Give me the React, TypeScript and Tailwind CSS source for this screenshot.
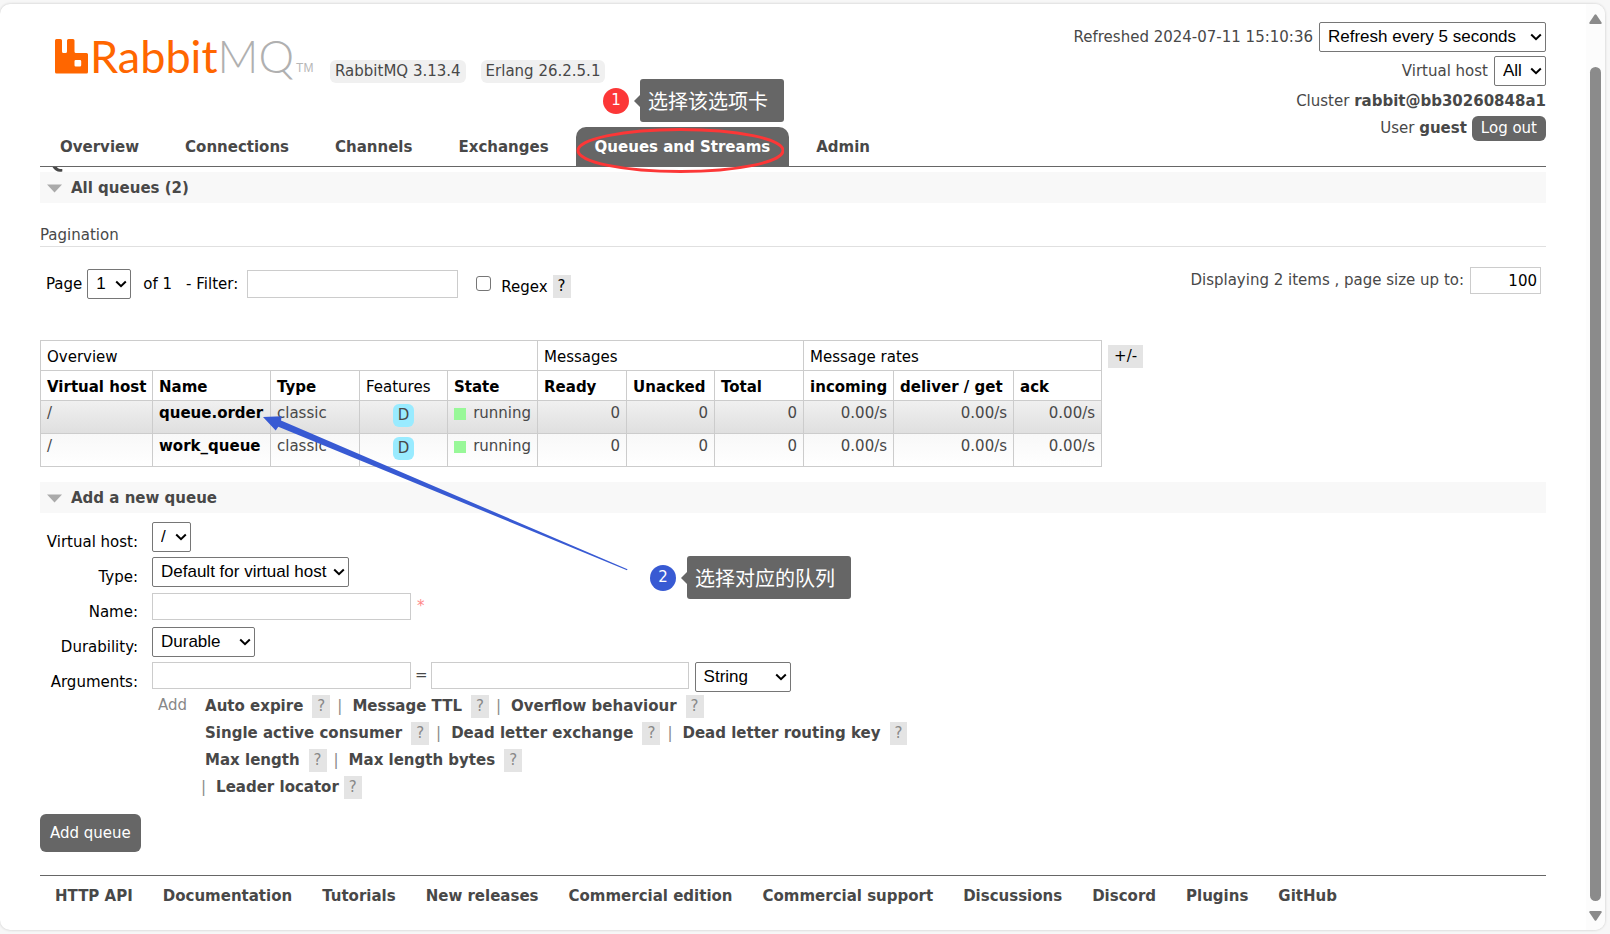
import type { ReactNode } from "react";

const NAV = ["Overview", "Connections", "Channels", "Exchanges", "Queues and Streams", "Admin"];

const FOOTER = [
  "HTTP API",
  "Documentation",
  "Tutorials",
  "New releases",
  "Commercial edition",
  "Commercial support",
  "Discussions",
  "Discord",
  "Plugins",
  "GitHub",
];

const QUEUES = [
  { name: "queue.order", fill: "bg-linear-to-b from-[#f0f0f0] to-[#dfdfdf]" },
  { name: "work_queue", fill: "bg-linear-to-b from-[#f8f8f8] to-white" },
];

const ARGUMENTS = [
  ["Auto expire", "Message TTL", "Overflow behaviour"],
  ["Single active consumer", "Dead letter exchange", "Dead letter routing key"],
  ["Max length", "Max length bytes"],
];

function Select({ id, label, value, width }: { id: string; label?: string; value: string; width: string }) {
  return (
    <span className="relative inline-flex">
      <select
        id={id}
        aria-label={label}
        defaultValue={value}
        className={`h-[30px] appearance-none rounded-xs border border-[#767676] bg-white pl-2 font-['Liberation_Sans',Arial,sans-serif] text-[17px] leading-5 text-black ${width}`}
      >
        <option>{value}</option>
      </select>
      <svg viewBox="0 0 12 8" aria-hidden="true" className="pointer-events-none absolute top-[11px] right-1 h-2 w-3">
        <path d="M1.2 1.5 L6 6.2 L10.8 1.5" fill="none" stroke="#000" strokeWidth="2" />
      </svg>
    </span>
  );
}

function Help({ tone = "text-[#888]" }: { tone?: string }) {
  return (
    <button type="button" className={`h-[23px] bg-[#e4e4e4] px-[5px] ${tone}`}>
      ?
    </button>
  );
}

function SectionTitle({ children }: { children: ReactNode }) {
  return (
    <h2 className="flex h-[31px] items-center gap-[9px] bg-[#f8f8f8] pt-0.5 pl-[7px] font-bold text-[#484848]">
      <svg viewBox="0 0 15 9" aria-hidden="true" className="h-[9px] w-[15px]">
        <path d="M0 0.5 H15 L7.5 8.5 Z" fill="#aaa" />
      </svg>
      {children}
    </h2>
  );
}

function Logo() {
  return (
    <a href="#home" className="flex w-[255px] items-end text-[45px] leading-9">
      <svg viewBox="0 0 33 35" aria-hidden="true" className="h-[35px] w-[33px] shrink-0">
        <path
          fillRule="evenodd"
          fill="#f60"
          d="M1.5 0 H5.5 Q7 0 7 1.5 V12.5 Q7 14 8.5 14 H10.5 Q12 14 12 12.5 V1.5 Q12 0 13.5 0 H18 Q19.5 0 19.5 1.5 V12.5 Q19.5 14 21 14 H31.5 Q33 14 33 15.5 V33 Q33 34.5 31.5 34.5 H1.5 Q0 34.5 0 33 V1.5 Q0 0 1.5 0 Z M20.7 21 Q19.5 21 19.5 22.2 V26.2 Q19.5 27.4 20.7 27.4 H25 Q26.2 27.4 26.2 26.2 V22.2 Q26.2 21 25 21 Z"
        />
      </svg>
      <span className="ml-0.5 font-[Lato,sans-serif] text-[#f60]">Rabbit</span>
      <span className="font-[Lato,sans-serif] font-light text-[#b0b0b0]">MQ</span>
      <span className="ml-0.5 font-['Liberation_Sans',sans-serif] text-xs leading-3 text-[#b7b7b7]">TM</span>
    </a>
  );
}

function Bubble({ n, color, children }: { n: number; color: string; children: ReactNode }) {
  return (
    <div className="flex items-center whitespace-nowrap text-white">
      <span className={`flex size-[26px] items-center justify-center rounded-full ${color}`}>{n}</span>
      <svg viewBox="0 0 6 12" aria-hidden="true" className="ml-[5px] h-3 w-1.5">
        <path d="M6 0 L0 6 L6 12 Z" fill="#666" />
      </svg>
      <span className="flex h-[43px] items-center rounded-[3px] bg-[#666] pr-4 pl-2 font-['Noto_Sans_CJK_SC',sans-serif] text-xl">
        {children}
      </span>
    </div>
  );
}

function Argument({ name, first }: { name: string; first: boolean }) {
  return (
    <>
      {!first && <span className="mr-[10px] ml-[7px]">|</span>}
      <a href="#argument" className="mr-[9px] font-bold text-[#484848]">
        {name}
      </a>
      <Help />
    </>
  );
}

const head = "border border-[#ccc] px-1.5 pt-[3px]";
const cell = "border border-[#ccc] px-1.5 pt-px";
const field = "border border-[#ccc] bg-white px-1";
const formLabel = "pt-[9px] text-right text-black";

export default function App() {
  return (
    <div className="min-h-screen bg-[#f7f7f7] pt-1 pr-[5px] pb-[5px] font-['DejaVu_Sans',Verdana,sans-serif] text-[15px] leading-[23px] text-[#484848]">
      <div className="relative flex rounded-[10px] bg-white shadow-[0_0_3px_rgba(0,0,0,0.2)]">
        <div className="min-w-0 flex-1 pr-10 pb-[11px] pl-10">
          <header className="flex h-[123px] justify-between pt-[18px]">
            <div className="flex items-end self-start pt-[16px] pl-[15px]">
              <Logo />
              <div className="-mb-[9px] ml-5 flex gap-[15px]">
                <span className="rounded-md bg-[#f0f0f0] px-[5px]">RabbitMQ 3.13.4</span>
                <span className="rounded-md bg-[#f0f0f0] px-[5px]">Erlang 26.2.5.1</span>
              </div>
            </div>
            <div className="flex flex-col items-end">
              <div className="flex items-center gap-1.5">
                <label htmlFor="refresh">Refreshed 2024-07-11 15:10:36</label>
                <Select id="refresh" value="Refresh every 5 seconds" width="w-[227px]" />
              </div>
              <div className="mt-1 flex items-center gap-1.5">
                <label htmlFor="vhost-view">Virtual host</label>
                <Select id="vhost-view" value="All" width="w-[52px]" />
              </div>
              <div className="mt-1">
                Cluster <b>rabbit@bb30260848a1</b>
              </div>
              <div className="mt-[3px] flex items-center gap-[5px]">
                <span>
                  User <b>guest</b>
                </span>
                <button type="button" className="h-[25px] rounded-md bg-[#666] px-[9px] text-white">
                  Log out
                </button>
              </div>
            </div>
          </header>

          <nav className="flex gap-2 border-b border-[#666] pl-px">
            {NAV.map((item) => (
              <a
                key={item}
                href="#tab"
                className={
                  item === "Queues and Streams"
                    ? "relative rounded-t-[10px] bg-[#666] px-[19px] pt-[9px] pb-[7px] font-bold text-white"
                    : "px-[19px] pt-[9px] pb-[7px] font-bold"
                }
              >
                {item}
                {item === "Queues and Streams" && (
                  <svg
                    viewBox="0 0 208 46"
                    aria-hidden="true"
                    className="pointer-events-none absolute top-0 left-0 h-[46px] w-[208px]"
                  >
                    <ellipse cx="104.5" cy="23.5" rx="102.5" ry="21" fill="none" stroke="#fc3737" strokeWidth="3" />
                  </svg>
                )}
              </a>
            ))}
          </nav>

          <main>
            <div className="h-[5px] pl-3">
              <svg viewBox="0 0 11 5" aria-hidden="true" className="h-[5px] w-[11px]">
                <path d="M0.5 0 H5 Q6 2.2 10.3 2 V4.4 Q4 5.8 0.5 0 Z" fill="#484848" />
              </svg>
            </div>
            <SectionTitle>All queues (2)</SectionTitle>

            <h3 className="mt-[21px] border-b border-[#e0e0e0] leading-[22px]">Pagination</h3>

            <div className="mt-5 flex items-start justify-between pr-[5px] pl-1.5">
              <div className="mt-0.5 flex items-start text-black">
                <label htmlFor="page" className="mt-1 mr-[5px]">
                  Page
                </label>
                <Select id="page" value="1" width="w-11" />
                <span className="mt-1 ml-3">of 1</span>
                <label htmlFor="filter" className="mt-1 ml-3.5">
                  - Filter:
                </label>
                <input id="filter" type="text" className={`mt-px ml-[9px] h-7 w-[211px] ${field}`} />
                <input
                  id="regex"
                  type="checkbox"
                  className="mt-[7px] ml-[18px] size-[15px] appearance-none rounded-[3px] border border-[#767676] bg-white"
                />
                <label htmlFor="regex" className="mt-[7px] mr-[5px] ml-[10px]">
                  Regex
                </label>
                <span className="mt-1.5 flex">
                  <Help tone="text-black" />
                </span>
              </div>
              <div className="flex items-center gap-1.5">
                <label htmlFor="page-size">Displaying 2 items , page size up to:</label>
                <input
                  id="page-size"
                  type="text"
                  defaultValue="100"
                  className="h-[27px] w-[71px] border border-[#ccc] bg-white px-[3px] text-right text-black"
                />
              </div>
            </div>

            <div className="mt-[41px] flex items-start gap-1.5">
              <table className="w-[1062px] table-fixed border-collapse">
                <colgroup>
                  <col className="w-[112px]" />
                  <col className="w-[118px]" />
                  <col className="w-[89px]" />
                  <col className="w-[88px]" />
                  <col className="w-[90px]" />
                  <col className="w-[89px]" />
                  <col className="w-[88px]" />
                  <col className="w-[89px]" />
                  <col className="w-[90px]" />
                  <col className="w-[120px]" />
                  <col className="w-[88px]" />
                </colgroup>
                <thead className="text-left whitespace-nowrap text-black">
                  <tr className="h-[30px]">
                    <th colSpan={5} className={`${head} font-normal`}>
                      Overview
                    </th>
                    <th colSpan={3} className={`${head} font-normal`}>
                      Messages
                    </th>
                    <th colSpan={3} className={`${head} font-normal`}>
                      Message rates
                    </th>
                  </tr>
                  <tr className="h-[30px]">
                    <th className={head}>Virtual host</th>
                    <th className={head}>Name</th>
                    <th className={head}>Type</th>
                    <th className={`${head} font-normal`}>Features</th>
                    <th className={head}>State</th>
                    <th className={head}>Ready</th>
                    <th className={head}>Unacked</th>
                    <th className={head}>Total</th>
                    <th className={head}>incoming</th>
                    <th className={head}>deliver / get</th>
                    <th className={head}>ack</th>
                  </tr>
                </thead>
                <tbody className="align-top">
                  {QUEUES.map((q) => (
                    <tr key={q.name} className={`h-[33px] ${q.fill}`}>
                      <td className={cell}>/</td>
                      <td className={cell}>
                        <a href="#queue" className="font-bold text-black">
                          {q.name}
                        </a>
                      </td>
                      <td className={cell}>classic</td>
                      <td className="border border-[#ccc] px-1.5 pt-[3px] text-center">
                        <abbr title="durable" className="inline-block h-[23px] rounded-md bg-[#99ebff] px-[5px] no-underline">
                          D
                        </abbr>
                      </td>
                      <td className={cell}>
                        <span className="flex items-center gap-[7px]">
                          <span className="h-3 w-[13px] bg-[#98f898]" />
                          running
                        </span>
                      </td>
                      <td className={`${cell} text-right`}>0</td>
                      <td className={`${cell} text-right`}>0</td>
                      <td className={`${cell} text-right`}>0</td>
                      <td className={`${cell} text-right`}>0.00/s</td>
                      <td className={`${cell} text-right`}>0.00/s</td>
                      <td className={`${cell} text-right`}>0.00/s</td>
                    </tr>
                  ))}
                </tbody>
              </table>
              <button type="button" className="mt-[5px] h-[23px] bg-[#e4e4e4] px-1.5 text-black">
                +/-
              </button>
            </div>

            <div className="mt-[15px]">
              <SectionTitle>Add a new queue</SectionTitle>
            </div>

            <form className="mt-[9px]">
              <div className="grid auto-rows-[30px] grid-cols-[98px_1fr] gap-x-3.5 gap-y-[5px]">
                <label htmlFor="vhost" className={formLabel}>
                  Virtual host:
                </label>
                <div>
                  <Select id="vhost" value="/" width="w-[39px]" />
                </div>
                <label htmlFor="type" className={formLabel}>
                  Type:
                </label>
                <div>
                  <Select id="type" value="Default for virtual host" width="w-[197px]" />
                </div>
                <label htmlFor="name" className={formLabel}>
                  Name:
                </label>
                <div className="flex items-start gap-1.5 pt-px">
                  <input id="name" type="text" className={`h-[27px] w-[259px] ${field}`} />
                  <span className="mt-0.5 text-[#f88]">*</span>
                </div>
                <label htmlFor="durability" className={formLabel}>
                  Durability:
                </label>
                <div>
                  <Select id="durability" value="Durable" width="w-[103px]" />
                </div>
                <label htmlFor="arg-key" className={formLabel}>
                  Arguments:
                </label>
                <div className="flex items-start">
                  <input id="arg-key" type="text" className={`h-[27px] w-[259px] ${field}`} />
                  <span className="mt-0.5 mr-[3px] ml-1">=</span>
                  <input aria-label="Argument value" type="text" className={`mr-1.5 h-[27px] w-[258px] ${field}`} />
                  <Select id="arg-type" label="Argument type" value="String" width="w-24" />
                </div>
              </div>

              <div className="mt-0.5 flex pl-[118px] text-[#888]">
                <span className="mr-3.5">Add</span>
                <div className="mt-px flex flex-col gap-1">
                  {ARGUMENTS.map((row) => (
                    <div key={row[0]} className="flex pl-1">
                      {row.map((name, i) => (
                        <Argument key={name} name={name} first={i === 0} />
                      ))}
                    </div>
                  ))}
                  <div className="flex">
                    <span className="mr-[10px]">|</span>
                    <a href="#argument" className="mr-[5px] font-bold text-[#484848]">
                      Leader locator
                    </a>
                    <Help />
                  </div>
                </div>
              </div>

              <button type="submit" className="mt-[15px] h-[38px] rounded-md bg-[#666] px-[10px] text-white">
                Add queue
              </button>
            </form>
          </main>

          <footer className="mt-[23px] flex gap-[30px] border-t border-[#666] pt-[9px] pb-[11px] pl-[15px] font-bold whitespace-nowrap">
            {FOOTER.map((item) => (
              <a key={item} href="#footer">
                {item}
              </a>
            ))}
          </footer>
        </div>

        <div aria-hidden="true" className="flex w-[19px] flex-col items-center rounded-r-[10px] bg-[#fcfcfc] pt-[10px] pb-[9px]">
          <svg viewBox="0 0 13 10" className="h-[10px] w-[13px]">
            <path d="M5.6 0.8 Q6.5 -0.4 7.4 0.8 L12.6 8.6 Q13 10 11.8 10 H1.2 Q0 10 0.4 8.6 Z" fill="#8b8b8b" />
          </svg>
          <div className="mt-[43px] mb-[10px] w-[11px] flex-1 rounded-full bg-[#8b8b8b]" />
          <svg viewBox="0 0 13 10" className="h-[10px] w-[13px]">
            <path d="M5.6 9.2 Q6.5 10.4 7.4 9.2 L12.6 1.4 Q13 0 11.8 0 H1.2 Q0 0 0.4 1.4 Z" fill="#8b8b8b" />
          </svg>
        </div>

        <div className="absolute top-[75px] left-[603px]">
          <Bubble n={1} color="bg-[#fc3737]">
            选择该选项卡
          </Bubble>
        </div>
        <div className="absolute top-[552px] left-[650px]">
          <Bubble n={2} color="bg-[#385ad3]">
            选择对应的队列
          </Bubble>
        </div>
        <svg
          viewBox="0 0 365 155"
          aria-hidden="true"
          className="pointer-events-none absolute top-[412px] left-[263px] h-[155px] w-[365px]"
        >
          <path d="M0 1 L18.7 0.3 L18 4.5 L364.5 153.2 L364 154.2 L15.3 10.7 L12.7 14.5 Z" fill="#385ad3" />
        </svg>
      </div>
    </div>
  );
}
